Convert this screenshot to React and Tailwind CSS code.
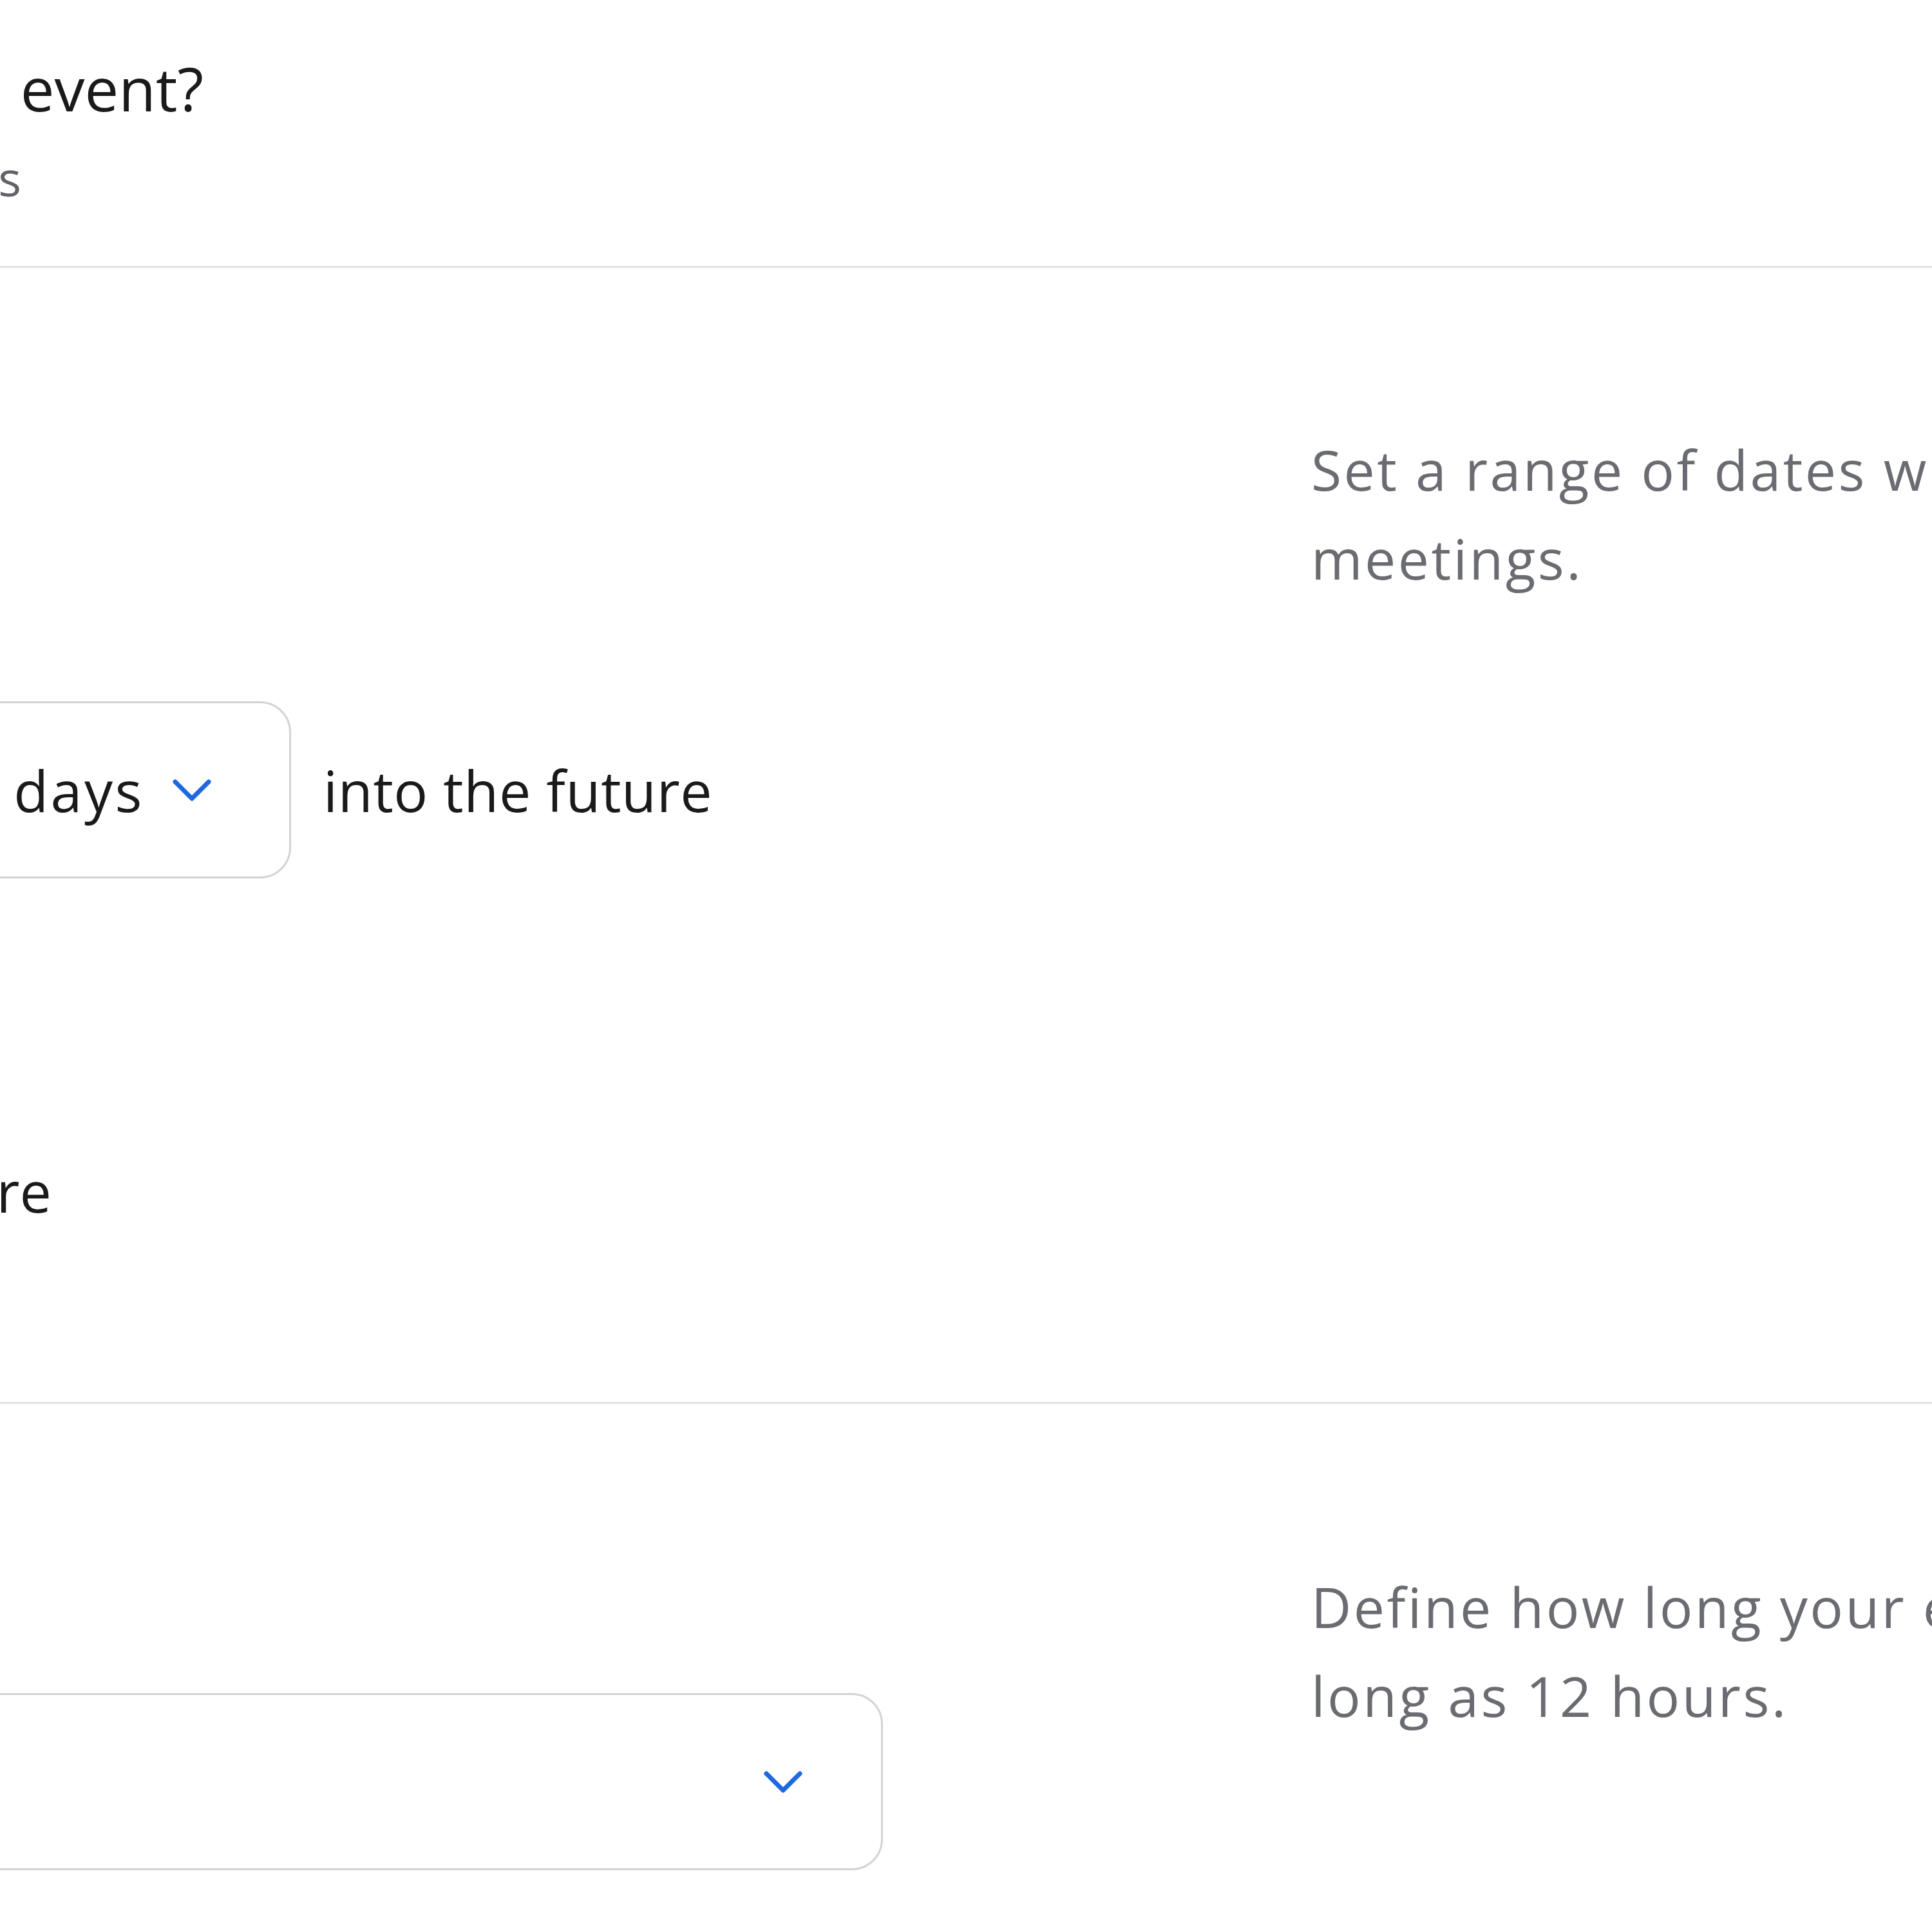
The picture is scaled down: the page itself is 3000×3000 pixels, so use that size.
const Chevron = ({ className = "" }) => (
  <svg width="64" height="38" viewBox="0 0 64 38" fill="none" className={"shrink-0 " + className}>
    <path d="M6 6 L32 32 L58 6" stroke="#1f68e0" strokeWidth="7" strokeLinecap="round" strokeLinejoin="round" />
  </svg>
);

export default function App() {
  return (
    <div className="w-[3000px] h-[3000px] overflow-hidden bg-white font-['Open_Sans',sans-serif] text-[#1a1a1a]">
      {/* section header, cut off at the left edge */}
      <header className="h-[413px] pt-[67px]">
        <div className="flex justify-end w-[316px]">
          <h2 className="shrink-0 whitespace-nowrap text-[94px] leading-[140px] font-normal">
            When can people book this <span className="ml-[7px]">event?</span>
          </h2>
        </div>
        <div className="flex justify-end w-[33px] mt-[14px]">
          <p className="shrink-0 whitespace-nowrap text-[75px] leading-[110px] text-[#606268]">30 min, 60 rolling calendar days</p>
        </div>
      </header>

      <div className="h-[3px] bg-[#e2e2e2]" />

      {/* date range */}
      <section className="flex h-[1761px]">
        <div className="w-[2036px] shrink-0 pt-[673px]">
          <div className="flex items-center">
            <div className="flex justify-end w-[452px]">
              <div className="shrink-0 flex items-center h-[275px] pl-[60px] pr-[119px] border-[3px] border-[#d3d3d3] rounded-[48px] bg-white">
                <span className="whitespace-nowrap text-[88px] leading-[132px] tracking-[3.5px]">calendar days</span>
                <Chevron className="ml-[42px]" />
              </div>
            </div>
            <span className="ml-[50px] whitespace-nowrap text-[88px] leading-[132px] tracking-[0.6px]">into the future</span>
          </div>
          <div className="flex justify-end w-[80px] mt-[419px]">
            <span className="shrink-0 whitespace-nowrap text-[88px] leading-[132px]">Indefinitely into the future</span>
          </div>
        </div>
        <div className="pt-[244px]">
          <p className="whitespace-nowrap text-[86px] leading-[138px] tracking-[3.4px] text-[#6a6c72]">
            Set a range of dates when you can accept
            <br />
            meetings.
          </p>
        </div>
      </section>

      <div className="h-[3px] bg-[#e2e2e2]" />

      {/* duration */}
      <section className="flex">
        <div className="w-[2036px] shrink-0 pt-[449px]">
          <div className="flex justify-end w-[1371px]">
            <div className="shrink-0 w-[1800px] flex items-center justify-between h-[275px] pl-[60px] pr-[120px] border-[3px] border-[#d3d3d3] rounded-[48px] bg-white">
              <span className="whitespace-nowrap text-[88px] leading-[132px]">30 min</span>
              <Chevron />
            </div>
          </div>
        </div>
        <div className="pt-[246px]">
          <p className="whitespace-nowrap text-[86px] leading-[138px] tracking-[3.4px] text-[#6a6c72]">
            Define how long your event will be. It can be as
            <br />
            long as 12 hours.
          </p>
        </div>
      </section>
    </div>
  );
}
